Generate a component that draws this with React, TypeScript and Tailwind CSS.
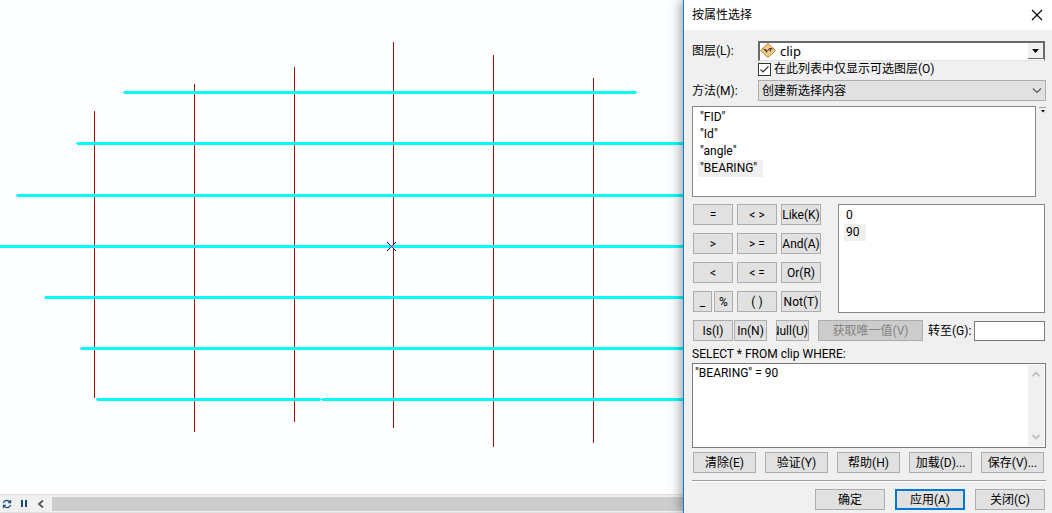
import { useState } from "react";
import { clsx } from "clsx";

const FIELDS = ['"FID"', '"Id"', '"angle"', '"BEARING"'];
const VALUES = ["0", "90"];

// Map features: x, top, bottom
const MERIDIANS = [
  [94, 111, 398],
  [194, 84, 432],
  [294, 67, 422],
  [393, 42, 428],
  [493, 55, 447],
  [593, 78, 443],
];

// Selected features: y, start, end (null runs off the visible extent)
const PARALLELS: [number, number, number | null][] = [
  [91, 124, 636],
  [142, 77, null],
  [194, 17, null],
  [245, 0, null],
  [296, 45, null],
  [347, 81, null],
  [398, 97, 320],
  [398, 322, null],
];

interface PushButtonProps {
  children: React.ReactNode;
  onClick?: () => void;
  className?: string;
  primary?: boolean;
  disabled?: boolean;
}

function PushButton({ children, onClick, className, primary, disabled }: PushButtonProps) {
  return (
    <button
      type="button"
      onClick={onClick}
      disabled={disabled}
      className={clsx(
        "flex h-[21px] shrink-0 items-center overflow-hidden whitespace-nowrap",
        primary ? "border-2 border-[#0078d7]" : "border border-[#adadad]",
        disabled ? "bg-[#cccccc] text-[#838383]" : "bg-[#e1e1e1] hover:bg-[#e5f1fb]",
        className ?? "w-10 justify-center"
      )}
    >
      {children}
    </button>
  );
}

interface ListBoxProps {
  label: string;
  items: string[];
  selected: string;
  onSelect: (item: string) => void;
  className: string;
}

function ListBox({ label, items, selected, onSelect, className }: ListBoxProps) {
  return (
    <ul
      role="listbox"
      aria-label={label}
      className={clsx("min-w-0 flex-1 border border-[#828790] bg-white px-[5px] pt-[2px]", className)}
    >
      {items.map((item) => (
        <li
          key={item}
          role="option"
          aria-selected={item === selected}
          onClick={() => onSelect(item)}
          className={clsx("w-fit pr-[6px] pl-[2px] leading-[17px]", item === selected && "bg-[#f0f0f0]")}
        >
          {item}
        </li>
      ))}
    </ul>
  );
}

function MapView() {
  return (
    <section className="flex min-w-0 flex-1 flex-col bg-[#fdfeff]">
      <svg className="min-h-0 w-full flex-1" shapeRendering="crispEdges" role="img" aria-label="clip">
        {MERIDIANS.map(([x, top, bottom]) => (
          <rect key={x} x={x} y={top} width="1" height={bottom - top} fill="#961400" />
        ))}
        {PARALLELS.map(([y, start, end]) => (
          <g key={`${y}-${start}`} fill="#00ffff">
            <rect x={start} y={y} width={end ? end - start : "100%"} height="3" />
            <rect x={start - 1} y={y + 1} width={end ? end - start + 2 : "100%"} height="1" />
          </g>
        ))}
        <path d="M387 242l9 9M396 242l-9 9" stroke="#000050" />
        <path d="M390 245l3 3M393 245l-3 3" stroke="#e00060" />
      </svg>
      <div className="flex h-[19px] shrink-0 items-center border-t border-b border-[#e0e0e0] bg-[#f0f0f0]">
        <button type="button" aria-label="刷新" className="flex w-[14px] justify-center">
          <svg width="10" height="10" viewBox="0 0 11 11" fill="none" stroke="#164a80">
            <path d="M1.5 4.5C2 2.5 3.5 1.5 5.3 1.5 7 1.5 8 2.3 9 3.5M9.5 1v3H6.8M9.5 6.5C9 8.5 7.5 9.5 5.7 9.5 4 9.5 3 8.7 2 7.5M1.5 10V7h2.7" strokeWidth="1.2" />
          </svg>
        </button>
        <button type="button" aria-label="暂停" className="flex w-5 justify-center">
          <svg width="6" height="7" viewBox="0 0 6 7" fill="#164a80">
            <path d="M0 0h2v7H0zM4 0h2v7H4z" />
          </svg>
        </button>
        <button type="button" aria-label="向左滚动" className="flex w-[18px] pl-[3px]">
          <svg width="8" height="8" viewBox="0 0 8 8" fill="none" stroke="#555555" strokeWidth="1.8">
            <path d="M6 .5L2 4l4 3.5" />
          </svg>
        </button>
        <div className="h-[14px] flex-1 bg-[#cdcdcd]" />
      </div>
    </section>
  );
}

function SelectByAttributes() {
  const [onlySelectable, setOnlySelectable] = useState(true);
  const [field, setField] = useState('"BEARING"');
  const [value, setValue] = useState("90");
  const [query, setQuery] = useState('"BEARING" = 90');

  const append = (token: string) => setQuery((q) => `${q} ${token}`);

  return (
    <section
      role="dialog"
      aria-labelledby="dialog-title"
      className="z-10 w-[35%] min-w-[369px] shrink-0 border-l border-[#1979ca] bg-[#f0f0f0] shadow-[-1px_0_12px_rgba(0,0,0,0.45)]"
    >
      <header className="flex h-[30px] items-center justify-between bg-white pr-[9px] pl-2">
        <h1 id="dialog-title">按属性选择</h1>
        <button type="button" aria-label="关闭">
          <svg width="12" height="12" viewBox="0 0 12 12" stroke="#000000" strokeWidth="1.1">
            <path d="M1 1l10 10M11 1L1 11" />
          </svg>
        </button>
      </header>

      <form className="flex flex-col pt-[11px] pr-[6px] pl-2" onSubmit={(e) => e.preventDefault()}>
        <div className="flex items-center pr-px">
          <label htmlFor="layer" className="w-[66px] shrink-0">图层(L):</label>
          <div className="relative min-w-0 flex-1">
            <select
              id="layer"
              className="block h-5 w-full appearance-none border-t-2 border-r border-b border-l-2 border-t-[#696969] border-r-[#696969] border-b-[#e3e3e3] border-l-[#696969] bg-white pb-px pl-5 font-['Noto_Sans'] text-[13px] leading-4"
            >
              <option>clip</option>
            </select>
            <svg className="pointer-events-none absolute top-px left-px" width="18" height="17" viewBox="0 0 18 17">
              <path d="M9 1.5L16.5 8.5 9 15.5 1.5 8.5z" fill="#f3c987" stroke="#b58642" />
              <path d="M4.500 7l3.500 2.500 2.500-3 3 .5M7.500 10.500L6.500 7M11 6l.5 3.500" fill="none" stroke="#33281a" />
            </svg>
            <span className="pointer-events-none absolute top-[2px] right-px flex h-4 w-4 items-center justify-center border-r border-b border-[#696969] bg-[#f0f0f0]">
              <svg width="7" height="4" viewBox="0 0 7 4">
                <path d="M0 0h7L3.500 4z" />
              </svg>
            </span>
          </div>
        </div>

        <label className="ml-[66px] flex h-4 items-center gap-[3px]">
          <span className="relative flex">
            <input
              type="checkbox"
              checked={onlySelectable}
              onChange={(e) => setOnlySelectable(e.target.checked)}
              className="h-[13px] w-[13px] appearance-none border border-[#333333] bg-white"
            />
            {onlySelectable && (
              <svg className="pointer-events-none absolute inset-0" width="13" height="13" viewBox="0 0 13 13" fill="none" stroke="#333333" strokeWidth="1.2">
                <path d="M2.500 6.500l2.500 2.500 5.500-5.500" />
              </svg>
            )}
          </span>
          在此列表中仅显示可选图层(O)
        </label>

        <div className="mt-[3px] flex items-center">
          <label htmlFor="method" className="w-[66px] shrink-0">方法(M):</label>
          <div className="relative min-w-0 flex-1">
            <select id="method" className="block h-[21px] w-full appearance-none border border-[#adadad] bg-[#e1e1e1] pl-[3px]">
              <option>创建新选择内容</option>
            </select>
            <svg className="pointer-events-none absolute top-2 right-1" width="10" height="6" viewBox="0 0 10 6" fill="none" stroke="#555555" strokeWidth="1.1">
              <path d="M1 .5l4 4 4-4" />
            </svg>
          </div>
        </div>

        <div className="mt-[5px] flex items-start gap-[3px]">
          <ListBox label="字段" items={FIELDS} selected={field} onSelect={setField} className="h-[91px]" />
          <button type="button" aria-label="字段选项" className="mt-px flex h-[6px] w-[7px] items-end justify-center border-t border-[#a0a0a0]">
            <svg width="4" height="3" viewBox="0 0 4 3">
              <path d="M0 0h4L2 2.500z" />
            </svg>
          </button>
        </div>

        <div className="mt-[7px] flex gap-[17px] px-px">
          <div className="grid grid-cols-[40px_40px_40px] content-start gap-x-1 gap-y-2">
            <PushButton onClick={() => append("=")}>=</PushButton>
            <PushButton onClick={() => append("<>")}>&lt; &gt;</PushButton>
            <PushButton onClick={() => append("LIKE")}>Like(K)</PushButton>
            <PushButton onClick={() => append(">")}>&gt;</PushButton>
            <PushButton onClick={() => append(">=")}>&gt; =</PushButton>
            <PushButton onClick={() => append("AND")}>And(A)</PushButton>
            <PushButton onClick={() => append("<")}>&lt;</PushButton>
            <PushButton onClick={() => append("<=")}>&lt; =</PushButton>
            <PushButton onClick={() => append("OR")}>Or(R)</PushButton>
            <div className="flex gap-[2px]">
              <PushButton className="w-[19px] justify-center" onClick={() => append("_")}>_</PushButton>
              <PushButton className="w-[19px] justify-center" onClick={() => append("%")}>%</PushButton>
            </div>
            <PushButton onClick={() => append("()")}>( )</PushButton>
            <PushButton onClick={() => append("NOT")}>Not(T)</PushButton>
          </div>
          <ListBox label="唯一值" items={VALUES} selected={value} onSelect={setValue} className="h-[109px]" />
        </div>

        <div className="mt-[7px] flex items-center gap-[5px] px-px">
          <div className="flex gap-[9px]">
            <div className="flex gap-px">
              <PushButton onClick={() => append("IS")}>Is(I)</PushButton>
              <PushButton className="w-[33px] justify-center" onClick={() => append("IN")}>In(N)</PushButton>
            </div>
            <PushButton className="w-[33px] justify-end" onClick={() => append("NULL")}>Null(U)</PushButton>
            <PushButton className="w-[105px] justify-center" disabled>获取唯一值(V)</PushButton>
          </div>
          <label htmlFor="goto" className="w-[41px] shrink-0 whitespace-nowrap">转至(G):</label>
          <input id="goto" type="text" className="h-5 min-w-0 flex-1 border border-[#7a7a7a] bg-white px-1" />
        </div>

        <label htmlFor="query" className="h-[22px] pt-1 leading-[18px]">SELECT * FROM clip WHERE:</label>
        <div className="flex h-[85px] border border-[#7a7a7a] bg-white p-px">
          <textarea
            id="query"
            value={query}
            onChange={(e) => setQuery(e.target.value)}
            className="min-w-0 flex-1 resize-none px-px leading-4 outline-none"
          />
          <div className="flex w-4 flex-col items-center justify-between bg-[#f0f0f0] py-[6px]">
            <svg width="8" height="6" viewBox="0 0 8 6" fill="none" stroke="#bfbfbf" strokeWidth="1.800">
              <path d="M.5 5L4 1.500 7.500 5" />
            </svg>
            <svg width="8" height="6" viewBox="0 0 8 6" fill="none" stroke="#bfbfbf" strokeWidth="1.800">
              <path d="M.5 1L4 4.500 7.500 1" />
            </svg>
          </div>
        </div>

        <div className="mt-1 flex gap-[9px] px-px">
          <PushButton className="w-[63px] justify-center" onClick={() => setQuery("")}>清除(E)</PushButton>
          <PushButton className="w-[63px] justify-center">验证(Y)</PushButton>
          <PushButton className="w-[63px] justify-center">帮助(H)</PushButton>
          <PushButton className="w-[63px] justify-center">加载(D)...</PushButton>
          <PushButton className="w-[63px] justify-center">保存(V)...</PushButton>
        </div>

        <hr className="mt-[7px] h-[2px] border-t border-[#a0a0a0] bg-white" />

        <div className="mt-[7px] flex justify-end gap-[10px] px-px">
          <PushButton className="w-[70px] justify-center">确定</PushButton>
          <PushButton className="w-[70px] justify-center" primary>应用(A)</PushButton>
          <PushButton className="w-[70px] justify-center">关闭(C)</PushButton>
        </div>
      </form>
    </section>
  );
}

export default function App() {
  return (
    <main className="flex min-h-screen overflow-hidden bg-white font-[Roboto,'Noto_Sans_CJK_SC',sans-serif] text-[12px] leading-4 text-black">
      <MapView />
      <SelectByAttributes />
    </main>
  );
}
